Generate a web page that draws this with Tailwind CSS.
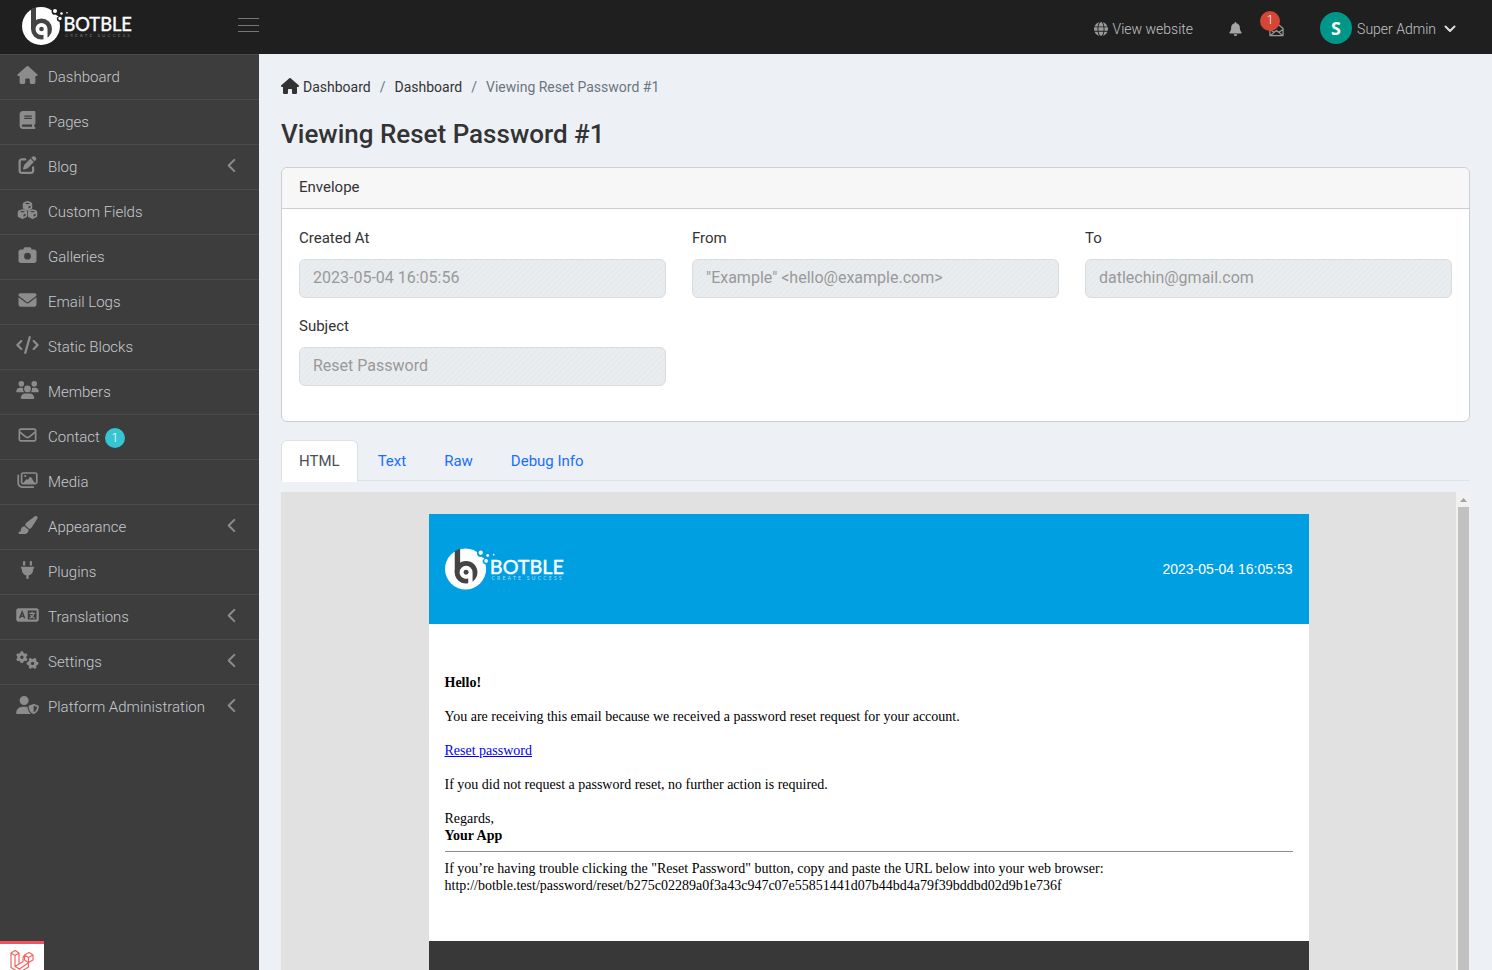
<!DOCTYPE html>
<html lang="en">
<head>
<meta charset="utf-8">
<meta name="viewport" content="width=device-width, initial-scale=1">
<title>Viewing Reset Password #1</title>
<script src="https://cdn.jsdelivr.net/npm/@tailwindcss/browser@4"></script>
</head>
<body class="flex h-screen flex-col overflow-hidden bg-[#edf1f6] font-[Roboto,sans-serif] text-[15px] text-[#333]">
<svg class="hidden" xmlns="http://www.w3.org/2000/svg">
  <symbol id="house" viewBox="0 0 576 512"><path d="M575.8 255.5c0 18-15 32.1-32 32.1h-32l.7 160.2c0 2.7-.2 5.4-.5 8.1V472c0 22.1-17.9 40-40 40H392c-22.1 0-40-17.9-40-40V384c0-17.700-14.300-32-32-32H256c-17.700 0-32 14.300-32 32v88c0 22.100-17.900 40-40 40H104c-22.100 0-40-17.900-40-40V287.600H32c-18 0-32-14-32-32.100c0-9 3-17 10-24L266.400 8c7-7 15-8 22-8s15 2 21 7L564.800 231.500c8 7 12 15 11 24z"/></symbol>
  <symbol id="logo" viewBox="0 0 111 38">
    <circle cx="19" cy="19" r="19" fill="#fff"/>
    <path d="M9 2.500Q11.500 .8 14 .6V22H9z" fill="#444"/>
    <circle cx="19.500" cy="22" r="10.500" fill="#444"/>
    <path d="M13.500 22a6 6 0 0 1 12 0V34h-4V27.700A6 6 0 0 1 13.500 22z" fill="#fff"/>
    <circle cx="19.500" cy="22" r="2.300" fill="#444"/>
    <circle cx="33" cy="4.500" r="3.400" fill="var(--bg)"/>
    <circle cx="38" cy="11.500" r="3.200" fill="var(--bg)"/>
    <g fill="#fff"><circle cx="33" cy="4" r="2"/><circle cx="33" cy="8.500" r=".9"/><circle cx="35.500" cy="9.500" r=".8"/><circle cx="39.500" cy="6.500" r="1.300"/><circle cx="45" cy="5.800" r=".8"/><circle cx="38" cy="11.500" r="1.700"/></g>
    <text x="41.500" y="24" fill="#fff" stroke="#fff" stroke-width=".4" font-family="Lato" font-weight="400" font-size="18.300">BOTBLE</text>
    <text x="43" y="29.500" fill="#fff" fill-opacity=".65" font-family="Lato" font-size="4.600" letter-spacing="2.100">CREATE SUCCESS</text>
  </symbol>
  <symbol id="gear" viewBox="0 0 640 512"><g id="gear-shape"><path d="M308.5 135.3c7.1-6.3 9.9-16.2 6.2-25c-2.3-5.3-4.8-10.5-7.6-15.5L304 89.400c-3-5-6.300-9.900-9.800-14.600c-5.700-7.600-15.700-10.100-24.700-7.100l-28.200 9.300c-10.700-8.800-23-16-36.200-20.900L199 27.100c-1.900-9.300-9.100-16.700-18.500-17.800C173.900 8.400 167.200 8 160.400 8h-.7c-6.800 0-13.500 .4-20.100 1.200c-9.400 1.100-16.600 8.600-18.500 17.800L115 56.100c-13.300 5-25.500 12.100-36.200 20.900L50.500 67.800c-9-3-19-.5-24.700 7.100c-3.500 4.700-6.800 9.600-9.900 14.600l-3 5.300c-2.800 5-5.300 10.200-7.600 15.600c-3.700 8.700-.9 18.600 6.200 25l22.200 19.800C32.600 161.900 32 168.900 32 176s.6 14.100 1.700 20.900L11.500 216.700c-7.100 6.300-9.900 16.200-6.200 25c2.300 5.300 4.800 10.500 7.600 15.600l3 5.200c3 5.100 6.300 9.900 9.900 14.600c5.700 7.600 15.700 10.100 24.700 7.100l28.200-9.300c10.700 8.800 23 16 36.200 20.900l6.100 29.100c1.900 9.300 9.100 16.700 18.500 17.800c6.700 .8 13.500 1.200 20.400 1.200s13.700-.4 20.400-1.200c9.400-1.100 16.600-8.600 18.500-17.800l6.100-29.100c13.300-5 25.500-12.100 36.200-20.900l28.200 9.300c9 3 19 .5 24.700-7.100c3.500-4.700 6.800-9.500 9.800-14.600l3.100-5.400c2.800-5 5.300-10.200 7.600-15.500c3.700-8.700 .9-18.600-6.200-25l-22.200-19.800c1.100-6.800 1.700-13.800 1.700-20.900s-.6-14.100-1.700-20.900l22.200-19.800zM112 176a48 48 0 1 1 96 0 48 48 0 1 1 -96 0z"/></g><use href="#gear-shape" transform="translate(464 352) rotate(90) translate(-160 -176)"/></symbol>
  <symbol id="chev" viewBox="0 0 10 16"><path d="M8 2 2 8l6 6" fill="none" stroke="currentColor" stroke-width="2.200" stroke-linecap="round" stroke-linejoin="round"/></symbol>
</svg>

<header class="flex h-[54px] shrink-0 items-center bg-[#1f1f1f] font-light text-[#c0c4c8]">
  <div class="flex w-[259px] items-center justify-between pl-[22px]">
    <a href="#" aria-label="Botble" class="mb-[3px] [--bg:#1f1f1f]"><svg class="h-[38px] w-[111px]"><use href="#logo"/></svg></a>
    <button aria-label="Toggle menu" class="mb-1 flex h-[14px] w-[21px] flex-col justify-between"><span class="h-px w-full bg-[#777]"></span><span class="h-px w-full bg-[#777]"></span><span class="h-px w-full bg-[#777]"></span></button>
  </div>
  <nav class="ml-auto flex items-center pr-9 pt-1 text-[14px]">
    <a href="#" class="flex items-center gap-[5px]"><svg class="size-[14px] fill-[#999]" viewBox="0 0 512 512"><path d="M352 256c0 22.200-1.200 43.600-3.300 64H163.300c-2.200-20.400-3.300-41.800-3.300-64s1.200-43.600 3.300-64H348.700c2.200 20.400 3.300 41.800 3.300 64zm28.800-64H503.900c5.300 20.500 8.100 41.900 8.100 64s-2.800 43.500-8.100 64H380.800c2.100-20.600 3.200-42 3.200-64s-1.100-43.400-3.200-64zm112.600-32H376.700c-10-63.900-29.800-117.400-55.300-151.600c78.300 20.700 142 77.500 171.900 151.600zm-149.100 0H167.700c6.100-36.400 15.500-68.600 27-94.700c10.500-23.600 22.200-40.700 33.500-51.500C239.400 3.200 248.700 0 256 0s16.600 3.200 27.800 13.800c11.300 10.800 23 27.900 33.500 51.500c11.600 26 20.900 58.200 27 94.700zm-209 0H18.600C48.600 85.900 112.200 29.100 190.600 8.400C165.100 42.600 145.300 96.100 135.300 160zM8.100 192H131.200c-2.100 20.600-3.200 42-3.200 64s1.100 43.400 3.200 64H8.100C2.800 299.500 0 278.100 0 256s2.800-43.500 8.100-64zM194.700 446.600c-11.600-26-20.900-58.200-27-94.600H344.300c-6.100 36.400-15.500 68.600-27 94.600c-10.500 23.600-22.200 40.700-33.500 51.500C272.600 508.800 263.300 512 256 512s-16.600-3.200-27.800-13.800c-11.300-10.800-23-27.900-33.500-51.500zM135.300 352c10 63.900 29.800 117.400 55.300 151.600C112.200 482.900 48.600 426.100 18.600 352H135.300zm358.100 0c-30 74.100-93.600 130.900-171.900 151.600c25.500-34.200 45.200-87.700 55.300-151.600H493.400z"/></svg>View website</a>
    <button aria-label="Notifications" class="ml-9"><svg class="h-[14px] w-[13px] fill-[#a5a5a5]" viewBox="0 0 448 512"><path d="M224 0c-17.700 0-32 14.300-32 32V49.900C119.500 61.400 64 124.200 64 200v33.400c0 45.400-15.500 89.500-43.800 124.900L5.300 377c-5.800 7.200-6.900 17.100-2.900 25.400S14.800 416 24 416H424c9.200 0 17.600-5.300 21.600-13.600s2.900-18.200-2.900-25.400l-14.900-18.600C399.500 322.900 384 278.800 384 233.400V200c0-75.800-55.500-138.600-128-150.100V32c0-17.700-14.300-32-32-32zM269.300 493.300c12-12 18.700-28.300 18.700-45.300H160c0 17 6.700 33.300 18.700 45.300s28.300 18.700 45.300 18.700 33.300-6.700 45.300-18.700z"/></svg></button>
    <button aria-label="Messages" class="relative ml-[27px]"><svg class="size-[15px]" viewBox="0 0 16 16" fill="none" stroke="#999" stroke-width="1.300" stroke-linejoin="round"><path d="M1 7 8 1l7 6v7.500H1zM1 8l4.500 3L1.500 14.500M15 8l-4.500 3 4 3.500M5.500 11 8 9l2.500 2"/></svg><span class="absolute -left-[9px] -top-[11px] flex size-5 items-center justify-center rounded-full bg-[#d64635] pb-px text-xs font-light text-white">1</span></button>
    <button class="-mt-0.5 ml-9 flex items-center"><span class="flex size-8 items-center justify-center rounded-full bg-[#009688] font-['Open_Sans',sans-serif] text-lg font-bold text-white">S</span><span class="ml-[5px] pt-0.5">Super Admin</span><svg class="ml-2 mt-0.5 h-2 w-3" viewBox="0 0 12 8"><path d="M1.500 1.500 6 6l4.500-4.500" fill="none" stroke="#ddd" stroke-width="2" stroke-linecap="round" stroke-linejoin="round"/></svg></button>
  </nav>
</header>

<div class="flex min-h-0 flex-1">
  <aside class="relative w-[259px] shrink-0 bg-[#3d3d3d]">
    <nav class="fill-[#8c8c8c] font-light text-[#c6cad0] [&>a]:flex [&>a]:h-[45px] [&>a]:items-center [&>a]:border-t [&>a]:border-[#4a4a4a] [&>a]:pl-4 [&>a]:pr-[22px] [&>a>svg:first-child]:mb-1 [&>a>svg:first-child]:mr-[9px] [&>a>svg:first-child]:h-[18px] [&>a>svg:first-child]:w-[23px]">
      <a href="#"><svg><use href="#house"/></svg>Dashboard</a>
      <a href="#"><svg viewBox="0 0 448 512"><path d="M96 0C43 0 0 43 0 96V416c0 53 43 96 96 96H384h32c17.700 0 32-14.300 32-32s-14.300-32-32-32V384c17.700 0 32-14.300 32-32V32c0-17.700-14.300-32-32-32H384 96zm0 384H352v64H96c-17.700 0-32-14.300-32-32s14.300-32 32-32zm32-240c0-8.800 7.200-16 16-16H336c8.800 0 16 7.200 16 16s-7.200 16-16 16H144c-8.800 0-16-7.200-16-16zm16 48H336c8.800 0 16 7.200 16 16s-7.200 16-16 16H144c-8.800 0-16-7.200-16-16s7.200-16 16-16z"/></svg>Pages</a>
      <a href="#"><svg viewBox="0 0 512 512"><path d="M471.600 21.700c-21.900-21.900-57.300-21.900-79.200 0L362.300 51.700l97.900 97.900 30.100-30.100c21.900-21.900 21.900-57.300 0-79.200L471.600 21.700zm-299.200 220c-6.100 6.100-10.800 13.600-13.500 21.900l-29.600 88.800c-2.900 8.600-.6 18.100 5.800 24.600s15.900 8.700 24.600 5.800l88.800-29.600c8.200-2.700 15.700-7.400 21.900-13.500L437.700 172.300 339.700 74.300 172.400 241.700zM96 64C43 64 0 107 0 160V416c0 53 43 96 96 96H352c53 0 96-43 96-96V320c0-17.700-14.300-32-32-32s-32 14.300-32 32v96c0 17.700-14.300 32-32 32H96c-17.700 0-32-14.300-32-32V160c0-17.700 14.300-32 32-32h96c17.700 0 32-14.300 32-32s-14.300-32-32-32H96z"/></svg>Blog<svg class="mb-1 ml-auto h-[15px] w-[11px] text-[#8c8c8c]"><use href="#chev"/></svg></a>
      <a href="#"><svg viewBox="0 0 576 512"><defs><g id="cube"><path d="M-30-132Q0-144 30-132L96-106Q134-92 134-54V46Q134 78 106 92L36 128Q0 146-36 128L-106 92Q-134 78-134 46V-54Q-134-92-96-106z"/><path d="M-72-68Q0-108 72-68 0-32-72-68zM30 14 86-12V48L30 74z" fill="#3d3d3d"/></g></defs><use href="#cube" x="288" y="140"/><use href="#cube" x="144" y="372"/><use href="#cube" x="432" y="372"/></svg>Custom Fields</a>
      <a href="#"><svg viewBox="0 0 512 512"><path d="M149.100 64.800L138.700 96H64C28.700 96 0 124.700 0 160V416c0 35.300 28.700 64 64 64H448c35.300 0 64-28.700 64-64V160c0-35.300-28.700-64-64-64H373.300L362.900 64.800C356.400 45.200 338.100 32 317.400 32H194.600c-20.700 0-39 13.200-45.500 32.800zM256 192a96 96 0 1 1 0 192 96 96 0 1 1 0-192z"/></svg>Galleries</a>
      <a href="#"><svg viewBox="0 0 512 512"><path d="M48 64C21.500 64 0 85.500 0 112c0 15.100 7.100 29.300 19.200 38.400L236.800 313.600c11.400 8.500 27 8.500 38.400 0L492.800 150.400c12.100-9.100 19.200-23.300 19.200-38.400c0-26.500-21.500-48-48-48H48zM0 176V384c0 35.300 28.700 64 64 64H448c35.300 0 64-28.700 64-64V176L294.400 339.200c-22.800 17.100-54 17.100-76.800 0L0 176z"/></svg>Email Logs</a>
      <a href="#"><svg viewBox="0 0 640 512"><path d="M392.800 1.200c-17-4.900-34.700 5-39.600 22l-128 448c-4.900 17 5 34.700 22 39.600s34.700-5 39.600-22l128-448c4.900-17-5-34.700-22-39.600zm80.600 120.100c-12.500 12.500-12.500 32.800 0 45.300L562.700 256l-89.400 89.400c-12.500 12.500-12.500 32.800 0 45.300s32.800 12.500 45.300 0l112-112c12.500-12.500 12.500-32.800 0-45.300l-112-112c-12.500-12.500-32.800-12.500-45.300 0zm-306.700 0c-12.500-12.500-32.800-12.500-45.300 0l-112 112c-12.500 12.500-12.500 32.800 0 45.300l112 112c12.500 12.500 32.800 12.500 45.300 0s12.500-32.800 0-45.300L77.300 256l89.400-89.400c12.500-12.500 12.500-32.800 0-45.300z"/></svg>Static Blocks</a>
      <a href="#"><svg viewBox="0 0 640 512"><path d="M144 0a80 80 0 1 1 0 160A80 80 0 1 1 144 0zM512 0a80 80 0 1 1 0 160A80 80 0 1 1 512 0zM0 298.700C0 239.800 47.800 192 106.700 192h42.700c15.900 0 31 3.500 44.600 9.700c-1.300 7.200-1.900 14.700-1.900 22.300c0 38.200 16.800 72.500 43.300 96H21.300C9.600 320 0 310.400 0 298.700zM405.300 320c26.600-23.500 43.300-57.800 43.300-96c0-7.600-.7-15-1.900-22.300c13.600-6.300 28.700-9.700 44.600-9.700h42.700C592.200 192 640 239.800 640 298.700c0 11.800-9.600 21.300-21.300 21.300H405.300zM224 224a96 96 0 1 1 192 0 96 96 0 1 1 -192 0zM128 485.300C128 411.700 187.700 352 261.300 352H378.700C452.300 352 512 411.700 512 485.300c0 14.700-11.900 26.700-26.700 26.700H154.700c-14.700 0-26.700-11.900-26.700-26.700z"/></svg>Members</a>
      <a href="#"><svg viewBox="0 0 512 512"><path d="M64 112c-8.800 0-16 7.200-16 16v22.100L220.500 291.700c20.700 17 50.400 17 71.100 0L464 150.100V128c0-8.800-7.200-16-16-16H64zM48 212.200V384c0 8.800 7.200 16 16 16H448c8.800 0 16-7.200 16-16V212.200L322 328.800c-38.400 31.500-93.700 31.500-132 0L48 212.200zM0 128C0 92.700 28.700 64 64 64H448c35.300 0 64 28.700 64 64V384c0 35.300-28.700 64-64 64H64c-35.300 0-64-28.700-64-64V128z"/></svg>Contact<span class="ml-[5px] mt-0.5 flex size-5 items-center justify-center rounded-full bg-[#36c6d3] text-xs text-white">1</span></a>
      <a href="#"><svg viewBox="0 0 576 512"><path d="M160 80H512c8.800 0 16 7.200 16 16V320c0 8.800-7.200 16-16 16H490.800L388.100 178.900c-4.400-6.800-12-10.900-20.100-10.900s-15.700 4.100-20.100 10.900l-52.200 79.800-12.400-16.900c-4.500-6.200-11.700-9.800-19.400-9.800s-14.800 3.600-19.400 9.800L175.600 336H160c-8.800 0-16-7.200-16-16V96c0-8.800 7.200-16 16-16zM96 96V320c0 35.300 28.700 64 64 64H512c35.300 0 64-28.700 64-64V96c0-35.300-28.700-64-64-64H160c-35.300 0-64 28.700-64 64zM48 120c0-13.300-10.700-24-24-24S0 106.700 0 120V344c0 75.100 60.900 136 136 136H456c13.300 0 24-10.700 24-24s-10.700-24-24-24H136c-48.600 0-88-39.400-88-88V120zm208 24a32 32 0 1 0 -64 0 32 32 0 1 0 64 0z"/></svg>Media</a>
      <a href="#"><svg viewBox="0 0 576 512"><path d="M339.300 367.100c27.300-3.900 51.900-19.400 67.200-42.900L568.200 74.100c12.600-19.500 9.400-45.300-7.600-61.200S517.700-4.400 499.100 9.600L262.400 187.200c-24 18-38.200 46.100-38.400 76.100L339.300 367.100zm-19.600 25.400l-116-104.400C143.900 290.300 96 339.600 96 400c0 3.900 .2 7.800 .6 11.600C98.400 429.100 86.400 448 68.800 448H64c-17.700 0-32 14.300-32 32s14.300 32 32 32H208c61.900 0 112-50.100 112-112c0-2.500-.1-5-.2-7.500z"/></svg>Appearance<svg class="mb-1 ml-auto h-[15px] w-[11px] text-[#8c8c8c]"><use href="#chev"/></svg></a>
      <a href="#"><svg viewBox="0 0 384 512"><path d="M96 0C78.300 0 64 14.300 64 32v96h64V32c0-17.700-14.300-32-32-32zM288 0c-17.700 0-32 14.300-32 32v96h64V32c0-17.700-14.300-32-32-32zM32 160c-17.700 0-32 14.300-32 32s14.300 32 32 32v32c0 77.400 55 142 128 156.800V480c0 17.700 14.300 32 32 32s32-14.300 32-32V412.800C297 398 352 333.400 352 256V224c17.700 0 32-14.300 32-32s-14.300-32-32-32H32z"/></svg>Plugins</a>
      <a href="#"><svg viewBox="0 0 640 512"><path d="M0 128C0 92.700 28.700 64 64 64H576c35.300 0 64 28.700 64 64V384c0 35.300-28.700 64-64 64H64c-35.300 0-64-28.700-64-64V128zm328 0v256H576V128H328z"/><path d="m96 350 72-180 72 180M120 290h96" fill="none" stroke="#3d3d3d" stroke-width="40"/><path d="M370 208h164M450 160v48M504 208c-20 70-70 120-124 138M400 250c30 50 70 80 124 100" fill="none" stroke="#8c8c8c" stroke-width="36"/></svg>Translations<svg class="mb-1 ml-auto h-[15px] w-[11px] text-[#8c8c8c]"><use href="#chev"/></svg></a>
      <a href="#"><svg><use href="#gear"/></svg>Settings<svg class="mb-1 ml-auto h-[15px] w-[11px] text-[#8c8c8c]"><use href="#chev"/></svg></a>
      <a href="#"><svg viewBox="0 0 640 512"><path d="M224 256A128 128 0 1 0 224 0a128 128 0 1 0 0 256zm-45.700 48C79.800 304 0 383.800 0 482.300C0 498.700 13.300 512 29.700 512H418.300c1.800 0 3.500-.2 5.300-.5c-76.300-55.100-99.800-141-103.100-200.200c-16.100-4.800-33.100-7.300-50.700-7.300H178.300zm308.800-78.300l-120 48C358 277.400 352 286.200 352 296c0 63.300 25.900 168.800 134.800 214.200c5.900 2.500 12.600 2.500 18.500 0C614.100 464.800 640 359.300 640 296c0-9.800-6-18.600-15.100-22.300l-120-48c-5.700-2.300-12.100-2.300-17.800 0zM591.400 312c-3.900 50.700-27.200 116.700-95.400 149.700V273.800L591.400 312z"/></svg>Platform Administration<svg class="mb-1 ml-auto h-[15px] w-[11px] text-[#8c8c8c]"><use href="#chev"/></svg></a>
    </nav>
    <!-- Debug bar toggle pinned to the window's corner -->
    <button aria-label="Open debug bar" class="absolute bottom-0 left-0 flex h-[29px] w-11 justify-center overflow-hidden border-t-[3px] border-[#f4515f] bg-white pt-[5px]"><svg class="h-[26px] w-6 shrink-0" viewBox="0 0 24 26" fill="none" stroke="#f4645f" stroke-width="1.200" stroke-linejoin="round"><path d="M1 4 5 1.500 9 4v11l4-2.300V8.500L14.500 6 19 3.500 23 6v5l-4.500 2.600V18L9.500 23.500 1 18.500zM1 4l4 2.500L9 4M5 6.500V17.500L9.500 20l9-6.300M9 15l-4 2.500M14.500 6l4 2.500L23 6M18.500 8.500v5L14.500 11V6M9.500 20v3.500"/></svg></button>
  </aside>

  <main class="flex min-w-0 flex-1 flex-col px-[22px] pt-[21px]">
    <nav aria-label="Breadcrumb" class="flex h-6 items-center text-[14px]">
      <a href="#" class="flex items-center gap-1"><svg class="mb-0.5 h-4 w-[18px] fill-[#333]"><use href="#house"/></svg>Dashboard</a>
      <span class="px-[9px] text-[#6c757d]">/</span><a href="#">Dashboard</a>
      <span class="px-[9px] text-[#6c757d]">/</span><span class="text-[#6c757d]">Viewing Reset Password #1</span>
    </nav>
    <h1 class="mt-[19px] text-[26px] font-medium leading-8">Viewing Reset Password #1</h1>

    <section class="mt-[17px] shrink-0 rounded-md border border-[#ccced1] bg-white">
      <h2 class="flex h-[41px] items-center rounded-t-md border-b border-[#ccced1] bg-[#f7f7f7] px-[17px] pb-px">Envelope</h2>
      <form class="grid grid-cols-3 gap-x-[26px] gap-y-4 px-[17px] pb-[35px] pt-[17px] leading-6 [&_input]:mt-[9px] [&_input]:block [&_input]:h-[39px] [&_input]:w-full [&_input]:rounded-md [&_input]:border [&_input]:border-[#d9dcdf] [&_input]:bg-[repeating-linear-gradient(135deg,#e7eaed_0_2px,#eaedef_2px_4px)] [&_input]:px-[13px] [&_input]:pb-0.5 [&_input]:text-base [&_input]:text-[#999]">
        <div><label for="created">Created At</label><input id="created" disabled value="2023-05-04 16:05:56"></div>
        <div><label for="from">From</label><input id="from" disabled value='"Example" &lt;hello@example.com&gt;'></div>
        <div><label for="to">To</label><input id="to" disabled value="datlechin@gmail.com"></div>
        <div><label for="subject">Subject</label><input id="subject" disabled value="Reset Password"></div>
      </form>
    </section>

    <div role="tablist" class="mt-[18px] flex h-[41px] shrink-0 gap-0.5 border-b border-[#dee2e6] text-[#1a6dff] [&>button]:h-[42px] [&>button]:rounded-t-md [&>button]:border [&>button]:border-transparent [&>button]:px-[17px]">
      <button role="tab" aria-selected="true" class="border-[#dee2e6]! border-b-white! bg-white text-[#495057]">HTML</button>
      <button role="tab">Text</button>
      <button role="tab">Raw</button>
      <button role="tab">Debug Info</button>
    </div>

    <div class="mt-[11px] flex min-h-0 flex-1 overflow-hidden bg-[#e1e1e1] font-['Liberation_Serif',serif] text-[14px] leading-[17px] text-black">
      <div class="min-w-0 flex-1 pt-[22px]">
        <article class="mx-auto max-w-[880px] bg-white">
          <header class="flex h-[110px] items-center justify-between bg-[#009fe1] px-4 [--bg:#009fe1]"><svg class="h-[42px] w-[120px]" aria-label="Botble"><use href="#logo"/></svg><time class="font-['Liberation_Sans',sans-serif] text-white">2023-05-04 16:05:53</time></header>
          <div class="px-4 pb-[47px] pt-[50px]">
            <p class="mb-[17px] font-bold">Hello!</p>
            <p class="mb-[17px]">You are receiving this email because we received a password reset request for your account.</p>
            <p class="mb-[17px]"><a href="#" class="text-[#0000ee] underline">Reset password</a></p>
            <p class="mb-[17px]">If you did not request a password reset, no further action is required.</p>
            <p>Regards,<br><strong>Your App</strong></p>
            <hr class="mb-2 mt-[7px] border-t border-[#8c8c8c]">
            <p>If you’re having trouble clicking the "Reset Password" button, copy and paste the URL below into your web browser: http://botble.test/password/reset/b275c02289a0f3a43c947c07e55851441d07b44bd4a79f39bddbd02d9b1e736f</p>
          </div>
          <footer class="h-[110px] bg-[#383838]"></footer>
        </article>
      </div>
      <div aria-hidden="true" class="flex w-[14px] flex-col items-center bg-[#f1f1f1]"><div class="flex h-[15px] items-center pt-px"><svg class="h-1 w-[7px] fill-[#a3a3a3]" viewBox="0 0 7 4"><path d="M0 4 3.500 0 7 4z"/></svg></div><div class="w-[11px] flex-1 bg-[#c1c1c1]"></div></div>
    </div>
  </main>
</div>
</body>
</html>
